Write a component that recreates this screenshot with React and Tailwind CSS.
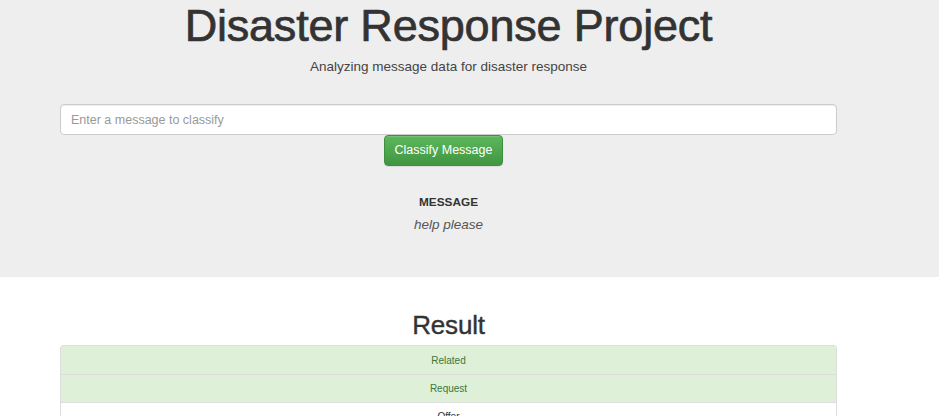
import React from 'react';

const rows = [
  { label: 'Related', hit: true },
  { label: 'Request', hit: true },
  { label: 'Offer', hit: false },
  { label: 'Aid Related', hit: false },
];

export default function App() {
  return (
    <div className="min-h-[416px] bg-white font-['Liberation_Sans',Helvetica,Arial,sans-serif] text-[#333]">
      {/* jumbotron */}
      <div className="bg-[#eeeeee] h-[277px] pt-[2px]">
        <div className="w-[777px] ml-[60px] flex flex-col items-center">
          <h1 className="text-[45px] leading-[48px] font-normal text-[#333] tracking-[-0.2px] [-webkit-text-stroke:0.7px_#333]">Disaster Response Project</h1>
          <p className="mt-[8px] text-[13.5px] leading-[18px] font-light text-[#444]">Analyzing message data for disaster response</p>
          <input
            className="mt-[28px] w-full h-[31px] bg-white border border-[#ccc] rounded-[4px] px-[10px] text-[12.5px] placeholder:text-[#999] shadow-[inset_0_1px_1px_rgba(0,0,0,0.075)] outline-none"
            placeholder="Enter a message to classify"
          />
          <button className="-ml-[10px] w-[119px] h-[31px] rounded-[4px] border border-[#3e8f3e] bg-gradient-to-b from-[#5cb85c] to-[#419641] text-white text-[12.5px] shadow-[inset_0_1px_0_rgba(255,255,255,0.15),0_1px_1px_rgba(0,0,0,0.075)]">
            Classify Message
          </button>
          <div className="mt-[28px] text-[11.8px] font-bold text-[#333] leading-[16px]">MESSAGE</div>
          <div className="mt-[6px] text-[13.5px] italic font-light text-[#555] leading-[18px]">help please</div>
        </div>
      </div>

      {/* result */}
      <div className="w-[777px] ml-[60px] flex flex-col items-center pt-[33px]">
        <h2 className="text-[26px] leading-[30px] font-normal text-[#333] tracking-[-0.2px] [-webkit-text-stroke:0.4px_#333]">Result</h2>
        <div className="mt-[5px] w-full border border-[#ddd] rounded-[3px] overflow-hidden">
          {rows.map((r, i) => (
            <div
              key={r.label}
              className={`h-[28px] flex items-center justify-center text-[10px] ${i > 0 ? 'border-t border-[#ddd]' : ''} ${r.hit ? 'bg-[#dff0d8] text-[#3c763d]' : 'bg-white text-[#333]'}`}
            >
              {r.label}
            </div>
          ))}
        </div>
      </div>
    </div>
  );
}
